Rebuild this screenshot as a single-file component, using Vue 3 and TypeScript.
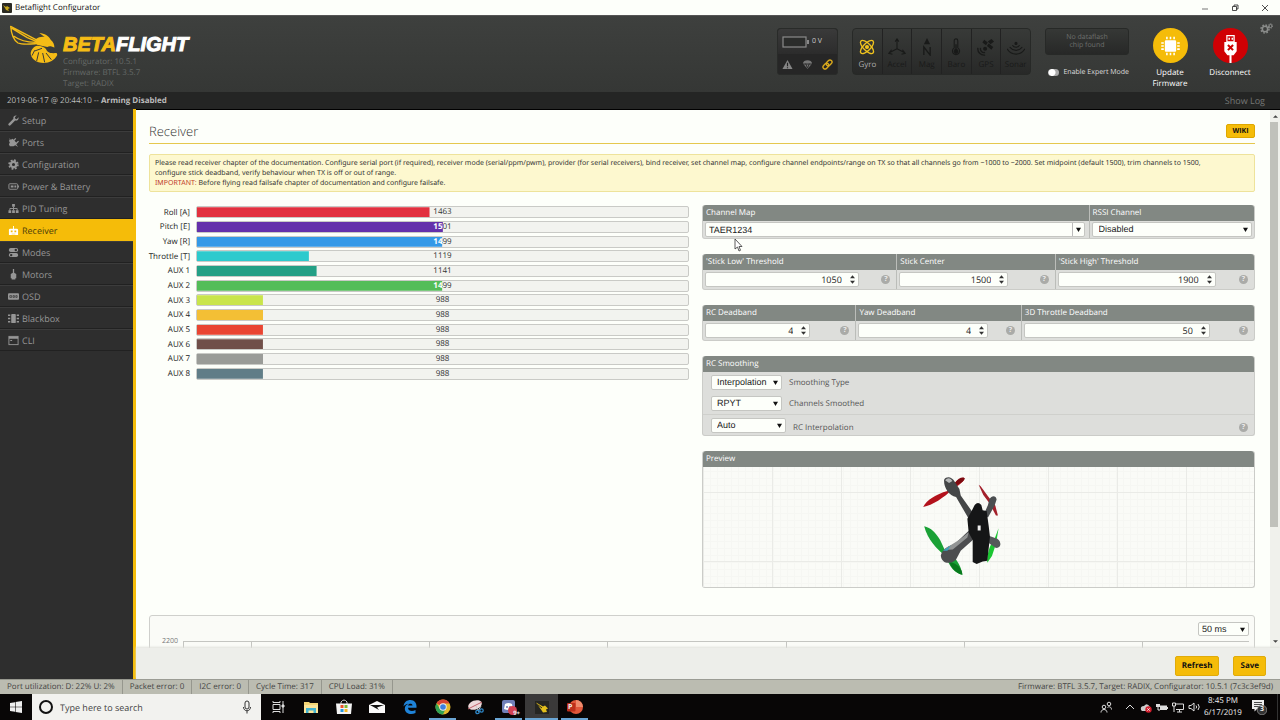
<script setup lang="ts">
import { ref } from 'vue'

interface Channel { name: string; value: number; color: string }
interface NumField { id: string; label: string; value: number; size: string }

const tabs = ['Setup', 'Ports', 'Configuration', 'Power & Battery', 'PID Tuning', 'Receiver', 'Modes', 'Motors', 'OSD', 'Blackbox', 'CLI']
const activeTab = ref('Receiver')

const sensors = ['Gyro', 'Accel', 'Mag', 'Baro', 'GPS', 'Sonar']

const channels: Channel[] = [
  { name: 'Roll [A]', value: 1463, color: '#e2313f' },
  { name: 'Pitch [E]', value: 1501, color: '#6430ab' },
  { name: 'Yaw [R]', value: 1499, color: '#3499e7' },
  { name: 'Throttle [T]', value: 1119, color: '#2dcacd' },
  { name: 'AUX 1', value: 1141, color: '#23a085' },
  { name: 'AUX 2', value: 1499, color: '#53bd58' },
  { name: 'AUX 3', value: 988, color: '#c9e54b' },
  { name: 'AUX 4', value: 988, color: '#f3bf35' },
  { name: 'AUX 5', value: 988, color: '#e94532' },
  { name: 'AUX 6', value: 988, color: '#704f49' },
  { name: 'AUX 7', value: 988, color: '#9a9c98' },
  { name: 'AUX 8', value: 988, color: '#607d87' },
]
const fillStyle = (c: Channel) => ({
  background: c.color,
  clipPath: `inset(0 ${100 - ((c.value - 800) / 1400) * 100}% 0 0)`,
})

const thresholds: NumField[] = [
  { id: 'low', label: "'Stick Low' Threshold", value: 1050, size: 'wide' },
  { id: 'center', label: 'Stick Center', value: 1500, size: 'narrow' },
  { id: 'high', label: "'Stick High' Threshold", value: 1900, size: 'wide' },
]
const deadbands: NumField[] = [
  { id: 'rc', label: 'RC Deadband', value: 4, size: 'narrow' },
  { id: 'yaw', label: 'Yaw Deadband', value: 4, size: 'wide' },
  { id: 'throttle3d', label: '3D Throttle Deadband', value: 50, size: 'wide' },
]
const numberGroups = [
  { cls: 'cols-threshold', fields: thresholds },
  { cls: 'cols-deadband', fields: deadbands },
]
const smoothing = [
  { id: 'type', value: 'Interpolation', label: 'Smoothing Type' },
  { id: 'channels', value: 'RPYT', label: 'Channels Smoothed' },
  { id: 'interp', value: 'Auto', label: 'RC Interpolation' },
]
const status = ['Port utilization: D: 22% U: 2%', 'Packet error: 0', 'I2C error: 0', 'Cycle Time: 317', 'CPU Load: 31%']
const channelMap = ref('TAER1234')
</script>

<template>
  <div class="desktop">
    <header class="titlebar">
      <svg class="appicon" viewBox="0 0 10 10"><rect width="10" height="10" rx="1" fill="#2b2b22" /><path d="M1 2l3 2 1-1 3 2-2 1 1 2-3-1-1-2z" fill="#c9ab1c" /></svg>
      <span class="title">Betaflight Configurator</span>
      <div class="winbtns">
        <button aria-label="Minimize"><svg viewBox="0 0 10 10"><path d="M2 6h6" stroke="#777" fill="none" /></svg></button>
        <button aria-label="Restore"><svg viewBox="0 0 10 10"><path d="M2.500 3.500h4v4h-4zM4 3.500V2h4v4H6.500" stroke="#222" fill="none" stroke-width=".8" /></svg></button>
        <button aria-label="Close"><svg viewBox="0 0 10 10"><path d="M2 2l6 6M8 2L2 8" stroke="#222" fill="none" stroke-width=".8" /></svg></button>
      </div>
    </header>

    <div class="header">
      <svg class="bee" viewBox="0 0 144 117">
        <g fill="none" stroke="#f5bc16" stroke-width="4" stroke-linejoin="round" stroke-linecap="round">
          <path d="M2 4L78 44M2 4C4 28 12 46 24 54C38 60 56 58 78 56M6 10L52 38L80 50M12 34C28 46 52 52 76 52" />
        </g>
        <path d="M78 42C86 36 96 34 104 36L88 24C104 26 116 32 122 44C130 50 134 60 133 68C126 64 118 62 112 66L84 60C76 58 74 50 78 42Z" fill="#f5bc16" />
        <path d="M82 62C94 62 104 66 108 72C112 82 118 86 140 84L142 90C134 106 118 114 102 114C78 114 62 100 62 84C64 72 72 64 82 62Z" fill="#f5bc16" />
        <path d="M74 76L66 92M86 82L80 108M98 84L104 112M108 84L124 104M74 78L96 70" stroke="#393b39" stroke-width="3" fill="none" />
      </svg>
      <div class="brand">
        <div class="wordmark"><span>BETA</span>FLIGHT</div>
        <div>Configurator: 10.5.1</div>
        <div>Firmware: BTFL 3.5.7</div>
        <div>Target: RADIX</div>
      </div>

      <div class="battery">
        <div class="volt">
          <svg viewBox="0 0 27 12"><rect x="1" y="1" width="23" height="10" fill="#2b2c2b" stroke="#8a8a8a" stroke-width="1.200" /><path d="M25 4h2v4h-2z" fill="#8a8a8a" /></svg>
          <span>0 V</span>
        </div>
        <div class="lamps">
          <svg viewBox="0 0 12 12"><path d="M6 1L11.500 11H.5z" fill="#858585" /><path d="M6 4v4M6 9v1" stroke="#222" stroke-width="1.300" /></svg>
          <svg viewBox="0 0 12 12"><path d="M1 5C1 0 11 0 11 5L6 11z" fill="#777" /><path d="M1 5.500h10M4 5l2 5 2-5" stroke="#2a2a2a" fill="none" /></svg>
          <svg viewBox="0 0 12 12"><g fill="none" stroke="#d9a91c" stroke-width="1.500" transform="rotate(-45 6 6)"><rect x="0" y="3.800" width="7" height="4.400" rx="2.200" /><rect x="5" y="3.800" width="7" height="4.400" rx="2.200" /></g></svg>
        </div>
      </div>

      <div class="sensors">
        <div v-for="s in sensors" :key="s" class="sensor" :class="{ on: s === 'Gyro' }">
          <svg viewBox="0 0 20 20" fill="none" stroke="currentColor" stroke-width="1.500">
            <g v-if="s === 'Gyro'"><ellipse cx="10" cy="10" rx="9.500" ry="4" transform="rotate(45 10 10)" /><ellipse cx="10" cy="10" rx="9.500" ry="4" transform="rotate(-45 10 10)" /><circle cx="10" cy="10" r="1.500" fill="currentColor" /></g>
            <g v-else-if="s === 'Accel'"><path d="M10 12V2M10 12l-8 4M10 12l8 4M8 4l2-3 2 3M4 13l-3 4 4 1M16 13l3 4-4 1" stroke-width="1.200" /></g>
            <g v-else-if="s === 'Mag'"><path d="M10 0l3.500 7h-7z" fill="currentColor" stroke="none" /><path d="M6.500 19v-9l7 9v-9" /></g>
            <g v-else-if="s === 'Baro'"><path d="M8 11V3a2 2 0 0 1 4 0v8a4 4 0 1 1-4 0z" stroke-width="1.200" /><circle cx="10" cy="15" r="2" fill="currentColor" /><path d="M10 15V7" /></g>
            <g v-else-if="s === 'GPS'"><path d="M8 2l4 3-2 3-4-3zM13 6l5 4-2 3-5-4zM12 4l4-3 3 3-4 3z" fill="currentColor" stroke="none" /><path d="M1 11a7 7 0 0 0 8 8M4 11a4 4 0 0 0 5 5" /><circle cx="9" cy="12" r="1.500" fill="currentColor" /></g>
            <g v-else><path d="M0 12c5 8 15 8 20 0M3 10c4 5 10 5 14 0M6 8c2 3 6 3 8 0" stroke-width="1.300" /><circle cx="10" cy="6" r="1" fill="currentColor" /></g>
          </svg>
          <span>{{ s }}</span>
        </div>
      </div>

      <div class="flash">
        <div class="flashbox">No dataflash<br />chip found</div>
        <label class="expert"><input type="checkbox" role="switch" />Enable Expert Mode</label>
      </div>

      <div class="actions">
        <button class="action">
          <svg viewBox="0 0 34 34"><circle cx="17" cy="17" r="17" fill="#f5bc09" /><rect x="11.500" y="12" width="11" height="11" rx="1" fill="#fff" /><path d="M13.500 8.500v18M17 8.500v18M20.500 8.500v18M8 14.500h18M8 17.500h18M8 20.500h18" stroke="#fff" stroke-width="1.500" stroke-dasharray="2.500 13" /></svg>
          <span>Update<br />Firmware</span>
        </button>
        <button class="action">
          <svg viewBox="0 0 34 34"><circle cx="17" cy="17" r="17" fill="#d00004" /><path d="M13.500 7.500h7v6h-7z" fill="none" stroke="#fff" stroke-width="1.200" /><path d="M15 9.500h1.500v2H15zM18 9.500h1.500v2H18zM11 13.500h12v9l-3 4h-2V34h-2v-7.500h-2l-3-4z" fill="#fff" /><path d="M14.500 16.500l5 5M19.500 16.500l-5 5" stroke="#c00" stroke-width="2" /></svg>
          <span>Disconnect</span>
        </button>
      </div>
      <button class="gears" aria-label="Options">
        <svg viewBox="0 0 13 11" fill="none" stroke="#8a8c8a"><circle cx="5" cy="6" r="2.700" stroke-width="1.600" /><circle cx="5" cy="6" r="4" stroke-dasharray="1.600 1.540" stroke-width="1.500" /><circle cx="10.500" cy="3" r="1.500" /><circle cx="10.500" cy="3" r="2.200" stroke-dasharray="1 .73" /></svg>
      </button>
    </div>

    <div class="logbar">
      <span>2019-06-17 @ 20:44:10 -- <b>Arming Disabled</b></span>
      <a href="#log">Show Log</a>
    </div>

    <div class="main">
      <nav class="sidebar">
        <a v-for="t in tabs" :key="t" href="#tab" :class="{ active: t === activeTab }" @click.prevent="activeTab = t">
          <svg viewBox="0 0 12 12" fill="currentColor">
            <path v-if="t === 'Setup'" d="M11.500 2.500L9.500 4.500 8 4 7.500 2.500 9.500.5C7 0 5.300 2 5.900 4.200L.8 9.300a1.300 1.300 0 0 0 1.900 1.900l5.100-5.100c2.200.6 4.200-1.100 3.700-3.600z" />
            <path v-else-if="t === 'Ports'" d="M1 1l2 2 2-1 5 5-1 1 2 3-3-2-2 1H2l-1-2 1-2-1-2 1-1zM8 1l1 1-2 2-1-1zM11 4l1 1-2 2-1-1z" />
            <g v-else-if="t === 'Configuration'"><circle cx="6" cy="6" r="3" fill="none" stroke="currentColor" stroke-width="2.600" /><circle cx="6" cy="6" r="4.800" fill="none" stroke="currentColor" stroke-width="1.800" stroke-dasharray="2 1.770" /></g>
            <g v-else-if="t === 'Power & Battery'"><rect x="1" y="3" width="9.500" height="6" rx="1" fill="none" stroke="currentColor" /><path d="M3 5h3v2H3zM7 5h2v2H7zM11 5h1v2h-1z" /></g>
            <g v-else-if="t === 'PID Tuning'"><path d="M4.500 1h3v3h-3zM.5 8h3v3h-3zM4.500 8h3v3h-3zM8.500 8h3v3h-3z" /><path d="M6 4v4M2 8V6h8v2" fill="none" stroke="currentColor" /></g>
            <path v-else-if="t === 'Receiver'" fill-rule="evenodd" d="M5.500 1h1v3H10l1 1v6H1V5l1-1h3.500zM3 6v2h2V6zM7 6v2h2V6zM4 9.500v.6h4v-.6z" />
            <g v-else-if="t === 'Modes'"><rect x="1" y="1" width="10" height="4.500" rx="2" /><circle cx="8.500" cy="3.200" r="1.300" fill="#2e2e2e" /><rect x="1" y="6.500" width="10" height="4.500" rx="2" /><circle cx="3.500" cy="8.800" r="1.300" fill="#2e2e2e" /></g>
            <path v-else-if="t === 'Motors'" d="M5.300 0h1.400v4L9 5.500V10H8v1.500H4V10H3V5.500L5.300 4z" />
            <g v-else-if="t === 'OSD'"><rect x="0" y="2.500" width="12" height="7" rx="1" /><path d="M2 5h2v2H2zM5.500 5h1.500v2H5.500zM8.500 5h1.500v2H8.500z" fill="none" stroke="#2e2e2e" stroke-width=".7" /></g>
            <g v-else-if="t === 'Blackbox'"><rect x="3.500" y="1" width="5" height="10" rx="1" /><path d="M0 2.500h2.500M0 6h2.500M0 9.500h2.500M9.500 2.500H12M9.500 6H12M9.500 9.500H12" stroke="currentColor" stroke-width="1.500" /></g>
            <g v-else><rect x="1" y="1.500" width="10" height="9" fill="none" stroke="currentColor" /><path d="M1 2h10v2H1zM2.500 5.500h2v1h-2z" /></g>
          </svg>
          <span>{{ t }}</span>
        </a>
      </nav>

      <section class="content">
        <div class="scrollrow">
          <div class="page">
            <div class="pagehead">
              <h1>Receiver</h1>
              <button class="wiki">WIKI</button>
            </div>
            <p class="note">
              Please read receiver chapter of the documentation. Configure serial port (if required), receiver mode (serial/ppm/pwm), provider (for serial receivers), bind receiver, set channel map, configure channel endpoints/range on TX so that all channels go from ~1000 to ~2000. Set midpoint (default 1500), trim channels to 1500,
              <br />configure stick deadband, verify behaviour when TX is off or out of range.<br />
              <em>IMPORTANT:</em> Before flying read failsafe chapter of documentation and configure failsafe.
            </p>

            <div class="columns">
              <div class="meters">
                <div v-for="c in channels" :key="c.name" class="meter">
                  <span class="name">{{ c.name }}</span>
                  <div class="bar">
                    <span>{{ c.value }}</span>
                    <span class="fill" :style="fillStyle(c)" aria-hidden="true">{{ c.value }}</span>
                  </div>
                </div>
              </div>

              <div class="forms">
                <div class="box cols-map">
                  <div class="cell">
                    <label class="head" for="map">Channel Map</label>
                    <div class="body">
                      <div class="combo">
                        <input id="map" v-model="channelMap" type="text" />
                        <button aria-label="Presets"><svg viewBox="0 0 6 6"><path d="M0 1h6L3 6z" /></svg></button>
                      </div>
                      <svg class="pointer" viewBox="0 0 9 14"><path d="M1 1v10l2.500-2 1.500 4 1.500-.7L5 8.500h3z" fill="#fff" stroke="#333" stroke-width=".8" /></svg>
                    </div>
                  </div>
                  <div class="cell">
                    <label class="head" for="rssi">RSSI Channel</label>
                    <div class="body">
                      <div class="pick full"><select id="rssi"><option>Disabled</option></select><svg viewBox="0 0 6 6"><path d="M0 1h6L3 6z" /></svg></div>
                    </div>
                  </div>
                </div>

                <div v-for="g in numberGroups" :key="g.cls" class="box" :class="g.cls">
                  <div v-for="f in g.fields" :key="f.id" class="cell">
                    <label class="head" :for="f.id">{{ f.label }}</label>
                    <div class="body">
                      <div class="num" :class="f.size">
                        <input :id="f.id" v-model="f.value" type="number" />
                        <svg viewBox="0 0 6 10"><path d="M0 3.500L3 0l3 3.500zM0 6.500L3 10l3-3.500z" /></svg>
                      </div>
                      <span class="help">?</span>
                    </div>
                  </div>
                </div>

                <div class="box smooth">
                  <h2 class="head">RC Smoothing</h2>
                  <div v-for="s in smoothing" :key="s.id" class="srow" :class="s.id">
                    <div class="pick"><select :id="s.id"><option>{{ s.value }}</option></select><svg viewBox="0 0 6 6"><path d="M0 1h6L3 6z" /></svg></div>
                    <label :for="s.id">{{ s.label }}</label>
                    <span v-if="s.id === 'interp'" class="help">?</span>
                  </div>
                </div>

                <div class="box preview">
                  <h2 class="head">Preview</h2>
                  <div class="stage">
                    <svg viewBox="115 85 360 310">
                      <path d="M127 184C137 164 165 146 200 136C228 104 245 92 252 98C246 112 232 120 214 132C190 156 155 180 127 184Z" fill="#b3121c" />
                      <path d="M222 112C234 94 250 92 252 99C248 110 236 114 224 120Z" fill="#7d0a10" />
                      <path d="M294 117L300 122L322 152L344 180L352 210L346 210L326 172L308 148Z" fill="#a3202b" />
                      <path d="M130 242C150 246 166 262 178 284L192 314C222 332 240 356 245 388C224 384 206 366 196 334C168 310 140 282 130 242Z" fill="#1aa136" />
                      <path d="M206 350C232 354 244 372 245 388C228 386 212 370 206 350Z" fill="#087a1d" />
                      <path d="M354 248L346 296L334 332L320 352C318 330 326 300 342 280Z" fill="#1bc532" />
                      <path d="M190 102C198 90 214 94 222 108L236 130L240 150L280 206L264 220L226 154C204 150 188 124 190 102Z" fill="#444647" />
                      <path d="M193 104C200 94 210 96 215 106L205 112Z" fill="#b7b9b9" />
                      <path d="M326 162C334 148 346 150 348 162L342 180L322 216L310 206L322 178Z" fill="#4b4e50" />
                      <path d="M180 330C188 306 206 302 222 296L264 256L278 282L240 316L226 342C208 360 182 354 180 330Z" fill="#4c4d4f" />
                      <path d="M190 314C204 298 226 294 264 260L260 276L216 312Z" fill="#929494" />
                      <path d="M186 316L210 300L200 316Z" fill="#3da0bb" />
                      <path d="M316 268L350 280C364 290 362 308 346 308L318 288Z" fill="#55585a" />
                      <path d="M282 178Q292 166 302 178L306 194L318 196L324 240L328 274L320 346L306 348L288 356L276 350V284L264 262L260 220L274 194Z" fill="#151617" />
                      <path d="M291 240h9v15h-9z" fill="#eee" />
                    </svg>
                  </div>
                </div>
              </div>
            </div>

            <div class="chart">
              <div class="pick rate"><select aria-label="Refresh rate"><option>50 ms</option></select><svg viewBox="0 0 6 6"><path d="M0 1h6L3 6z" /></svg></div>
              <div class="plot"><span>2200</span><div class="ticks"><i v-for="n in 7" :key="n"></i></div></div>
            </div>
          </div>
          <div class="scroll"><svg viewBox="0 0 6 4"><path d="M0 4l3-3 3 3z" /></svg><div class="thumb"></div><svg viewBox="0 0 6 4"><path d="M0 0h6L3 3z" /></svg></div>
        </div>
        <div class="toolbar"><button>Refresh</button><button>Save</button></div>
      </section>
    </div>

    <footer class="status">
      <span v-for="s in status" :key="s">{{ s }}</span>
      <span class="fw">Firmware: BTFL 3.5.7, Target: RADIX, Configurator: 10.5.1 (7c3c3ef9d)</span>
    </footer>

    <div class="taskbar">
      <button class="start" aria-label="Start"><svg viewBox="0 0 12 12" fill="#eee"><path d="M0 2l5-.8v4.500H0zM5.600 1.100L12 0v5.700H5.600zM0 6.300h5v4.500L0 10zM5.600 6.300H12V12l-6.400-1z" /></svg></button>
      <label class="search">
        <svg viewBox="0 0 16 16"><circle cx="8" cy="8" r="6" fill="none" stroke="#111" stroke-width="2" /></svg>
        <input type="text" placeholder="Type here to search" />
        <svg viewBox="0 0 16 16" fill="none" stroke="#333"><rect x="6" y="2" width="4" height="8" rx="2" /><path d="M4.500 8c0 5 7 5 7 0M8 12v2.500" /></svg>
      </label>
      <div class="apps">
        <button aria-label="Task view"><svg viewBox="0 0 16 16" fill="none" stroke="#ddd"><path d="M3 5.500h7v5H3zM3 2v1.500h7V2M3 14v-1.500h7V14M13 2v12" /><path d="M12 6h2v2h-2z" fill="#ddd" /></svg></button>
        <button aria-label="File Explorer"><svg viewBox="0 0 16 16"><path d="M1 3h5l1 1h8v10H1z" fill="#f3d576" /><path d="M1 6h14v8H1z" fill="#fbe59a" /><path d="M3 14V9h10v5h-2.500v-2.500h-5V14z" fill="#45b4d0" /></svg></button>
        <button aria-label="Store"><svg viewBox="0 0 16 16"><path d="M5 5V3q3-4 6 0v2" fill="none" stroke="#ccc" /><path d="M0 4.500h16L15 15H1z" fill="#f4f4f4" /><path d="M4.500 6h3v3h-3z" fill="#e8502a" /><path d="M8.500 6h3v3h-3z" fill="#7cb82f" /><path d="M4.500 10h3v3h-3z" fill="#2596dc" /><path d="M8.500 10h3v3h-3z" fill="#f6b51e" /></svg></button>
        <button aria-label="Mail"><svg viewBox="0 0 16 16"><path d="M0 6l8-4 8 4v8H0z" fill="#fafafa" /><path d="M1 6h14l-7 2.500 2 2.500z" fill="#111" /></svg></button>
        <button aria-label="Edge"><svg viewBox="0 0 16 16"><path d="M1.500 7.500C2 3 5 1 8.500 1c4 0 6 3 6 6.500v1.300H6c.2 3.500 4.500 4 7.500 2.200V14c-4.500 2-10.500.8-10.700-4.300C2.700 7 4.500 5.500 6.500 4.700 4 5 2.500 6 1.500 7.500zM6 6.500h4.500C10.500 4 6.500 4 6 6.500z" fill="#1f83d8" /></svg></button>
        <button class="run" aria-label="Chrome"><svg viewBox="0 0 16 16"><circle cx="8" cy="8" r="7.500" fill="#e3b92d" /><path d="M8 8L1.500 4.200A7.500 7.500 0 0 1 14.600 4.500H8z" fill="#d84435" /><path d="M8 15.500A7.500 7.500 0 0 1 1.500 4.200L5 10l5 1z" fill="#30a254" /><circle cx="8" cy="8" r="3.700" fill="#eee" /><circle cx="8" cy="8" r="2.800" fill="#3d7fe0" /></svg></button>
        <button aria-label="Snipping tool"><svg viewBox="0 0 16 16"><ellipse cx="7" cy="6" rx="7" ry="4.500" transform="rotate(-20 7 6)" fill="#eed9da" /><path d="M0 10l8-4 6-3" stroke="#c0606a" stroke-width="1" /><path d="M8 7l3 6M13 7l-3 5" stroke="#ccc" /><circle cx="9.500" cy="13" r="1.700" fill="none" stroke="#2f88c9" stroke-width="1.300" /><circle cx="13.500" cy="11.500" r="1.700" fill="none" stroke="#2f88c9" stroke-width="1.300" /></svg></button>
        <button class="run" aria-label="Discord"><svg viewBox="0 0 16 16"><rect x="1" y="1" width="13" height="13" rx="2" fill="#7180ba" /><path d="M4 5q3.500-2 7 0l1 5q-4.500 2-9 0z" fill="#fff" /><circle cx="6" cy="8" r="1" fill="#7180ba" /><circle cx="9" cy="8" r="1" fill="#7180ba" /><circle cx="11.500" cy="11.500" r="4.500" fill="#d34355" /></svg><span class="count">9+</span></button>
        <button class="run current" aria-label="Betaflight"><svg viewBox="0 0 16 16"><rect x="1" y="2" width="14" height="13" fill="#252522" /><path d="M2 3.500l7 4 2-1 3 3-2 1 1 2.500-4 .5L7 10.500z" fill="#e2be1c" /><path d="M3.500 5.500L8 9" stroke="#252522" /></svg></button>
        <button class="run" aria-label="PowerPoint"><svg viewBox="0 0 16 16"><circle cx="9" cy="8" r="7" fill="#e2583b" /><path d="M9 1a7 7 0 0 1 7 7H9z" fill="#f08b6c" /><rect x="0" y="4" width="8.500" height="8.500" rx="1" fill="#bd2f1b" /></svg><span class="pp">P</span></button>
      </div>
      <div class="tray">
        <svg class="people" viewBox="0 0 12 12" fill="none" stroke="#ddd"><circle cx="4" cy="6" r="1.800" /><circle cx="9" cy="3" r="1.800" /><path d="M1 11.500c0-4 6-4 6 0M7.500 6.500C9 5 11.500 6 11.500 8.500" /></svg>
        <svg viewBox="0 0 12 12" fill="none" stroke="#ddd"><path d="M2 8l4-4 4 4" /></svg>
        <svg viewBox="0 0 12 12"><path d="M1 9q-1-4 3-4 3-4 6 1 2 3-1 4H2z" fill="#ccc" /><circle cx="8.500" cy="8.500" r="3.200" fill="#d3202f" /><path d="M7.300 7.300l2.400 2.400M9.700 7.300L7.300 9.700" stroke="#fff" stroke-width=".8" /></svg>
        <svg viewBox="0 0 12 12"><rect x="4" y="4.500" width="7" height="4.500" fill="#ddd" /><path d="M0 3h4v3H0zM11 6h1v2h-1z" fill="#ddd" /><path d="M2 6v3h2" stroke="#ddd" fill="none" /></svg>
        <svg viewBox="0 0 12 12" fill="none" stroke="#ddd"><path d="M3 3h8.500v5.500H4M7.500 8.500V11M5 11h5M.5 2h3v3h-3zM2 5v6" /></svg>
        <svg viewBox="0 0 12 12" fill="none" stroke="#ddd"><path d="M1 4.500h2L6 2v8L3 7.500H1zM8 4.500q1.300 1.500 0 3M10 3q2.500 3 0 6" /></svg>
        <div class="clock">8:45 PM<br />6/17/2019</div>
        <div class="notif"><svg viewBox="0 0 16 16"><path d="M1 1h12v9H6l-2.500 2.500V10H1z" fill="#eee" /><path d="M3 3.500h8M3 5.500h8M3 7.500h5" stroke="#222" stroke-width=".8" /><circle cx="11" cy="11" r="4.800" fill="#333" stroke="#aaa" stroke-width=".6" /></svg><span>3</span></div>
      </div>
    </div>
  </div>
</template>

<style>
html, body { background: #000; overflow: hidden; }
</style>

<style scoped>
* { box-sizing: border-box; }
.desktop { display: flex; flex-direction: column; height: 100vh; font-family: "Open Sans", "Noto Sans", sans-serif; font-size: 9px; line-height: 11px; text-rendering: geometricPrecision; background: #fdfffa; color: #333; }
button { border: 0; padding: 0; background: none; font: inherit; color: inherit; display: flex; align-items: center; justify-content: center; text-rendering: inherit; }
input, select { font: inherit; margin: 0; border-radius: 0; min-width: 0; color: #222; text-rendering: inherit; }
a { text-decoration: none; color: inherit; }
h1, h2, p { margin: 0; font-weight: 400; }
svg { flex: none; display: block; }

.titlebar { display: flex; align-items: center; height: 15px; flex: none; padding-left: 2px; gap: 3px; color: #111; background: #fdfffa; }
.appicon { width: 10px; height: 10px; }
.title { flex: 1; font-size: 8px; }
.winbtns { display: flex; }
.winbtns button { width: 30px; }
.winbtns svg { width: 10px; height: 10px; }

.header { display: flex; flex: none; height: 77px; padding: 0 7px 0 10px; background: linear-gradient(#3e403e, #353735); border-top: 1px solid #555; }
.bee { width: 48px; height: 39px; margin-top: 9px; }
.brand { flex: 1; padding: 18px 0 0 5px; color: #656967; font-size: 8px; }
.wordmark { font: italic 900 20px/22px "Liberation Sans", Arial, sans-serif; color: #fff; -webkit-text-stroke: 1px currentColor; }
.wordmark span { color: #f5bc16; }
.battery { width: 61px; height: 47px; margin-top: 12px; border: 1px solid #292b29; border-radius: 3px; display: flex; flex-direction: column; background: #262626; }
.volt { flex: 1; display: flex; align-items: center; gap: 3px; padding-left: 4px; font-size: 7px; color: #ccc; background: linear-gradient(#3a3a3a, #2c2c2c); border-radius: 3px 3px 0 0; }
.volt svg { width: 27px; height: 12px; }
.lamps { height: 20px; display: flex; align-items: center; justify-content: space-around; }
.lamps svg { width: 11px; height: 11px; }
.sensors { display: flex; width: 179px; height: 47px; margin: 12px 14px 0; border: 1px solid #272927; border-radius: 4px; background: linear-gradient(#383a38, #282928); }
.sensor { flex: 1; display: flex; flex-direction: column; align-items: center; padding-top: 9px; gap: 3px; color: #191a19; font-size: 8px; border-left: 1px solid #222; }
.sensor:first-child { border: 0; }
.sensor svg { width: 18px; height: 18px; }
.sensor.on { color: #f0c31e; }
.sensor.on span { color: #aaa; }
.flash { width: 84px; padding-top: 12px; }
.flashbox { height: 27px; padding-top: 5px; border: 1px solid #272927; border-radius: 3px; background: linear-gradient(#363836, #272827); color: #6d6f6d; text-align: center; font-size: 7px; line-height: 8px; }
.expert { display: flex; align-items: center; gap: 4px; margin: 12px 0 0 3px; color: #ddd; font-size: 7px; white-space: nowrap; }
.expert input { appearance: none; width: 13px; height: 7px; border-radius: 4px; background: radial-gradient(circle at 4px 50%, #fff 3px, #aaa 4px); }
.actions { display: flex; padding: 12px 0 0 11px; }
.action { width: 60px; flex-direction: column; justify-content: flex-start; gap: 4px; color: #fff; font-size: 8px; }
.action svg { width: 35px; height: 35px; }
.gears { align-items: flex-start; padding-top: 7px; }
.gears svg { width: 13px; height: 11px; }

.logbar { display: flex; justify-content: space-between; align-items: center; flex: none; height: 17px; padding: 0 15px 0 7px; background: #242524; color: #bbb; }
.logbar span { font-size: 8px; }
.logbar a { color: #747674; }

.main { flex: 1; display: flex; min-height: 0; }
.sidebar { width: 136px; flex: none; background: #2e2e2e; border-right: 3px solid #f5bc09; }
.sidebar a { display: flex; align-items: center; gap: 3px; height: 22px; padding-left: 8px; border-top: 1px solid #3c3c3c; border-bottom: 1px solid #212121; color: #969696; }
.sidebar a:first-child { border-top-color: #2e2e2e; }
.sidebar svg { width: 11px; height: 11px; }
.sidebar .active { background: #f5bc09; border-color: #f5bc09; color: #fff; }
.sidebar .active span { color: #4a3b0c; }
.content { flex: 1; display: flex; flex-direction: column; min-width: 0; border-top: 1px solid #000; }
.scrollrow { flex: 1; display: flex; min-height: 0; }
.page { flex: 1; min-width: 0; overflow: hidden; padding: 13px 15px 0 13px; }
.scroll { width: 10px; display: flex; flex-direction: column; align-items: center; justify-content: space-between; background: #f0f1ec; padding: 4px 0; gap: 4px; }
.scroll svg { width: 5px; height: 4px; fill: #444; }
.thumb { width: 8px; height: 405px; margin-bottom: auto; align-self: flex-start; background: #c0c1bb; }
.pagehead { display: flex; justify-content: space-between; align-items: flex-start; height: 21px; border-bottom: 1px solid #e5c84e; }
h1 { font-size: 13px; line-height: 17px; font-weight: 300; color: #333; }
.wiki { height: 14px; width: 29px; margin-top: 1px; background: #f5bc09; border: 1px solid #dfa800; border-radius: 2px; color: #111; font-size: 7px; font-weight: 700; }
.note { margin-top: 10px; height: 38px; padding: 4px 5px; border: 1px solid #eee39b; border-radius: 2px; background: #fdf8cf; font-family: "Noto Sans", "Open Sans", sans-serif; font-size: 7px; line-height: 10px; color: #333; }
.note em { color: #c03c2c; font-style: normal; }
.columns { display: grid; grid-template-columns: 540fr 553fr; gap: 13px; margin-top: 13px; }
.meters { display: grid; grid-template-rows: repeat(12, 1fr); height: 176px; }
.meter { display: flex; align-items: center; gap: 6px; }
.name { width: 41px; display: flex; justify-content: flex-end; white-space: nowrap; font-size: 8px; color: #222; }
.bar { flex: 1; position: relative; height: 12px; border: 1px solid #c9cac6; border-radius: 2px; background: #f2f3ef; text-align: center; font-size: 8px; line-height: 10px; }
.bar .fill { position: absolute; inset: 0; color: #fff; font-weight: 700; }

.forms { display: flex; flex-direction: column; }
.box { display: grid; border: 1px solid #cbccc8; border-top: 0; border-radius: 3px; background: #dddedb; margin-bottom: 15px; }
.cols-map { grid-template-columns: 387fr 166fr; height: 34px; }
.cols-threshold { grid-template-columns: 194fr 159fr 200fr; height: 36px; }
.cols-deadband { grid-template-columns: 153fr 166fr 234fr; height: 36px; }
.cell { min-width: 0; }
.cell + .cell { border-left: 1px solid #bbbdb9; }
.head { display: block; height: 16px; line-height: 16px; padding-left: 3px; background: #828883; color: #fff; font-size: 8px; font-weight: 400; }
.cell:first-child .head { border-top-left-radius: 3px; }
.cell:last-child .head { border-top-right-radius: 3px; }
h2.head { border-radius: 3px 3px 0 0; }
.body { position: relative; display: flex; align-items: center; justify-content: space-between; padding: 2px 6px 0 2px; }
.cols-map .body { padding: 1px 2px 0; }
.cols-map .cell:first-child .body { padding-right: 4px; }
.combo, .num, .pick { display: flex; height: 15px; border: 1px solid #c5c6c2; background: #fdfffa; border-radius: 2px; align-items: center; }
.combo { flex: 1; }
input, select { border: 0; background: transparent; outline: 0; height: 13px; padding: 0 3px; font-family: "Liberation Sans", Arial, sans-serif; font-size: 9px; }
.combo input { flex: 1; }
.combo button { width: 12px; height: 13px; border-left: 1px solid #bbb; }
.combo button svg, .pick svg { width: 5px; height: 5px; fill: #111; }
.pointer { position: absolute; left: 31px; top: 17px; width: 9px; height: 14px; }
.num { padding-right: 3px; }
.num input { flex: 1; text-align: right; appearance: textfield; padding-right: 8px; font-family: inherit; }
.num input::-webkit-inner-spin-button { display: none; }
.num svg { width: 5px; height: 9px; fill: #333; }
.num.wide { width: 83%; }
.num.narrow { width: 73%; }
.pick { padding-right: 3px; }
.pick select { flex: 1; appearance: none; padding-left: 5px; }
.full { flex: 1; }
.full select { padding-left: 6px; }
.help { width: 9px; height: 9px; border-radius: 50%; background: #aaaba8; color: #eee; font-size: 7px; line-height: 9px; font-weight: 700; text-align: center; }
.srow { display: flex; align-items: center; gap: 7px; padding: 0 6px 0 8px; height: 21px; color: #555; font-size: 8px; }
.srow .pick { width: 71px; }
.srow.interp { border-top: 1px solid #cfd0cc; }
.srow.interp .pick { width: 75px; }
.srow.interp label { flex: 1; padding-top: 4px; }
.srow.interp .help { margin-top: 4px; }
.smooth { height: 80px; }
.preview { margin-bottom: 0; background: #fafbf7; grid-template-rows: 16px 120px; }
.stage { display: flex; justify-content: center; padding-top: 7px; background:
  linear-gradient(#eaebe7 1px, transparent 1px) 0 25px / 100% 69px,
  linear-gradient(90deg, #eaebe7 1px, transparent 1px) 0 0 / 69px 100%,
  linear-gradient(#f6f7f3 1px, transparent 1px) 0 4px / 100% 7px,
  linear-gradient(90deg, #f6f7f3 1px, transparent 1px) 0 0 / 7px 100%; }
.stage svg { width: 120px; height: 103px; }
.chart { margin-top: 27px; height: 150px; padding: 6px 5px 0 12px; border: 1px solid #cfd0cc; border-radius: 3px; background: #fafbf7; }
.rate { width: 51px; height: 14px; margin-left: auto; }
.rate select { padding-left: 3px; }
.plot { display: flex; gap: 3px; font-size: 7px; color: #777; }
.ticks { flex: 1; margin-top: 5px; height: 100px; display: grid; grid-template-columns: 68fr repeat(5, 178fr) 107fr; border-top: 1px solid #c4c5c1; margin-left: 2px; }
.ticks i { border-left: 1px solid #c4c5c1; }
.toolbar { flex: none; height: 31px; display: flex; align-items: center; justify-content: flex-end; gap: 14px; padding: 4px 14px 0 0; background: #edeeea; box-shadow: 0 -1px 2px #dfe0db; position: relative; }
.toolbar button { height: 20px; padding: 0 6px; border: 1px solid #e0ab0a; border-radius: 2px; background: #f5bc09; color: #111; font-weight: 700; font-size: 8px; }

.status { display: flex; flex: none; height: 15px; border-top: 1px solid #96978e; background: #bbbcb1; color: #444; font-size: 8px; line-height: 14px; }
.status span { padding: 0 7px; border-right: 1px solid #96978e; white-space: nowrap; }
.status .fw { margin-left: auto; border: 0; }

.taskbar { display: flex; flex: none; height: 26px; background: #080606; color: #eee; }
.start { width: 32px; }
.start svg { width: 12px; height: 12px; }
.search { width: 229px; display: flex; align-items: center; gap: 3px; padding: 0 6px; background: #f2f2ef; }
.search svg { width: 16px; height: 16px; }
.search input { flex: 1; font-family: inherit; }
.search input::placeholder { color: #444; }
.apps { display: flex; flex: 1; }
.apps button { width: 33px; position: relative; }
.apps svg { width: 16px; height: 16px; }
.run::after { content: ""; position: absolute; left: 3px; right: 3px; bottom: 0; height: 2px; background: #6aa5d4; }
.current { background: #3a3939; }
.current::after { left: 0; right: 0; }
.count { position: absolute; right: 5px; bottom: 3px; font-size: 6px; line-height: 8px; font-weight: 700; }
.pp { position: absolute; left: 10px; top: 8px; font-size: 7px; line-height: 11px; font-weight: 700; }
.tray { display: flex; align-items: center; gap: 4px; padding-right: 10px; font-size: 8px; line-height: 12px; border-right: 1px solid #333; margin-right: 2px; }
.tray svg { width: 12px; height: 12px; }
.tray .people { margin-right: 8px; }
.clock { width: 38px; margin-right: 5px; text-align: center; white-space: nowrap; }
.notif { position: relative; }
.tray .notif svg { width: 16px; height: 16px; }
.notif span { position: absolute; right: 3px; bottom: 0; font-size: 7px; line-height: 10px; font-weight: 700; }
</style>
